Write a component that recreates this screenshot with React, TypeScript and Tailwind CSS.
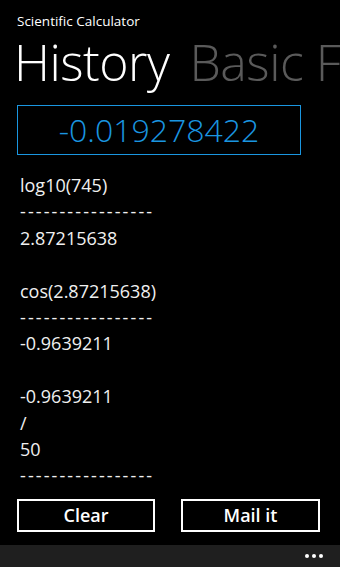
import React from "react";

const LINES = [
  "log10(745)",
  "-----------------",
  "2.87215638",
  "",
  "cos(2.87215638)",
  "-----------------",
  "-0.9639211",
  "",
  "-0.9639211",
  "/",
  "50",
  "-----------------",
];

export default function App() {
  return (
    <div className="w-[340px] h-[567px] bg-black text-white overflow-hidden flex flex-col" style={{ fontFamily: '"Open Sans", "Noto Sans", sans-serif' }}>
      {/* header */}
      <div className="pl-[17px] pt-[12px] text-[13.5px] leading-[18px]">Scientific Calculator</div>
      <div className="flex gap-[20px] pl-[14px] mt-[7px] text-[50px] leading-[50px] font-light whitespace-nowrap tracking-[-0.5px]">
        <span className="text-white">History</span>
        <span className="text-[#5a5a5a]">Basic Functions</span>
      </div>

      {/* result box */}
      <div className="mx-[17px] mt-[18px] w-[284px] h-[50px] border border-[#1a96e0] flex items-center justify-center text-[#1a96e0] text-[32px] font-light">
        -0.019278422
      </div>

      {/* history */}
      <div className="flex-1 overflow-hidden pl-[20px] pt-[17px] text-[18px] leading-[26.4px] text-[#f0f0f0]">
        {LINES.map((l, i) => (
          <div key={i} className="h-[26.4px] whitespace-pre">{l === "-----------------" ? <span className="tracking-[2.1px]">{l}</span> : l}</div>
        ))}
      </div>

      {/* buttons */}
      <div className="flex gap-[26px] px-[17px] pb-[13px] pt-[2px]">
        <button className="w-[138px] h-[33px] border-2 border-white text-[18px] font-semibold">Clear</button>
        <button className="w-[139px] h-[33px] border-2 border-white text-[18px] font-semibold">Mail it</button>
      </div>

      {/* app bar */}
      <div className="h-[22px] bg-[#1f1f1f] flex items-center justify-end pr-[17px] gap-[3px]">
        <span className="w-[4px] h-[4px] rounded-full bg-white" />
        <span className="w-[4px] h-[4px] rounded-full bg-white" />
        <span className="w-[4px] h-[4px] rounded-full bg-white" />
      </div>
    </div>
  );
}
